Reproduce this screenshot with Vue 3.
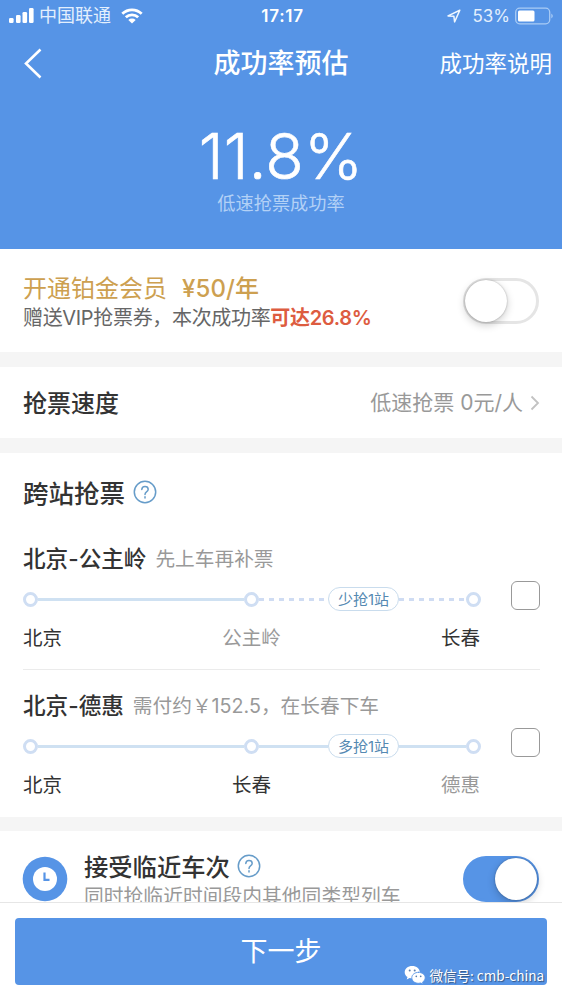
<script setup>
const routes = [
  {
    title: '北京-公主岭', note: '先上车再补票', tag: '少抢1站', dashed: true,
    stops: [{ name: '北京' }, { name: '公主岭', muted: true }, { name: '长春' }],
  },
  {
    title: '北京-德惠', note: '需付约￥152.5，在长春下车', tag: '多抢1站', dashed: false,
    stops: [{ name: '北京' }, { name: '长春' }, { name: '德惠', muted: true }],
  },
]
</script>

<template>
  <div class="screen">
    <header class="hero">
      <div class="status">
        <div class="carrier">
          <svg class="signal" width="26" height="15" viewBox="0 0 26 15">
            <rect x="0" y="10" width="4.600" height="5" rx="1.300" /><rect x="7" y="7" width="4.600" height="8" rx="1.300" />
            <rect x="13.500" y="4" width="4.600" height="11" rx="1.300" /><rect x="20" y="0" width="4.600" height="15" rx="1.300" />
          </svg>
          <span class="carrier-name">中国联通</span>
          <svg class="wifi" width="22" height="16" viewBox="0 0 22 16">
            <path d="M1.300 5.800a14 14 0 0 1 19.400 0M4.800 9.300a9 9 0 0 1 12.400 0" />
            <path class="solid" d="M7.300 12a5.400 5.400 0 0 1 7.400 0L11 15.600z" />
          </svg>
        </div>
        <span class="time">17:17</span>
        <div class="power">
          <svg width="14" height="14" viewBox="0 0 14 14"><path class="arrow" d="M1 6.900 12.800 1.200 7.600 12.900 6.900 7.300z" /></svg>
          <span class="percent">53%</span>
          <svg width="40" height="18" viewBox="0 0 40 18">
            <rect class="shell" x=".7" y="1.200" width="34" height="15.600" rx="4" />
            <rect class="charge" x="3" y="3.500" width="16.500" height="11" rx="1.500" />
            <path class="tip" d="M36.300 6.500q3 2.500 0 5z" />
          </svg>
        </div>
      </div>
      <nav class="nav">
        <svg class="back" width="18" height="31" viewBox="0 0 18 31"><path d="M16.500 1.500 2 15.500l14.500 14" /></svg>
        <h1>成功率预估</h1>
        <span class="nav-link">成功率说明</span>
      </nav>
      <div class="rate">11.8%</div>
      <div class="rate-label">低速抢票成功率</div>
    </header>

    <section class="member">
      <div class="member-text">
        <div class="gold"><span>开通铂金会员</span><span class="price">¥50/年</span></div>
        <div class="gift">赠送VIP抢票券，本次成功率<b>可达26.8%</b></div>
      </div>
      <div class="toggle"><i></i></div>
    </section>

    <section class="speed">
      <h2>抢票速度</h2>
      <span class="speed-value">低速抢票 0元/人</span>
      <svg width="10" height="16" viewBox="0 0 10 16"><path d="m1.500 1.500 6.500 6.500-6.500 6.500" /></svg>
    </section>

    <section class="cross">
      <div class="cross-head">
        <h2>跨站抢票</h2>
        <svg class="help" width="24" height="24" viewBox="0 0 24 24"><circle cx="12" cy="12" r="10.700" /><path d="M8.800 9.600q.1-3.100 3.200-3.100t3.200 2.700q0 1.500-1.700 2.600Q12 12.900 12 14.600M12 16.700v1.400" /></svg>
      </div>
      <article v-for="route in routes" :key="route.title" class="route">
        <div class="route-head"><h3>{{ route.title }}</h3><span>{{ route.note }}</span></div>
        <div class="track-row">
          <div class="track" :class="{ dashed: route.dashed }">
            <i class="dot"></i><i class="line first"></i>
            <i class="dot"></i><i class="line second"></i>
            <span class="tag">{{ route.tag }}</span>
            <i class="line third"></i><i class="dot"></i>
          </div>
          <i class="check"></i>
        </div>
        <div class="stops">
          <span v-for="stop in route.stops" :key="stop.name" :class="{ muted: stop.muted }">{{ stop.name }}</span>
        </div>
      </article>
    </section>

    <section class="nearby">
      <svg class="clock" width="46" height="46" viewBox="0 0 46 46">
        <circle class="disc" cx="23" cy="23" r="22.300" /><circle class="face" cx="23" cy="23" r="12" /><path d="M22.500 16.500v7.300h5" />
      </svg>
      <div class="nearby-text">
        <div class="nearby-head">
          <h2>接受临近车次</h2>
          <svg class="help" width="24" height="24" viewBox="0 0 24 24"><circle cx="12" cy="12" r="10.700" /><path d="M8.800 9.600q.1-3.100 3.200-3.100t3.200 2.700q0 1.500-1.700 2.600Q12 12.900 12 14.600M12 16.700v1.400" /></svg>
        </div>
        <p>同时抢临近时间段内其他同类型列车</p>
      </div>
      <div class="toggle on"><i></i></div>
    </section>

    <footer class="bottom">
      <div class="next">下一步
        <div class="wechat">
          <svg width="22" height="20" viewBox="0 0 22 20">
            <path class="bubble" d="M8.200 1C3.900 1 .7 3.700.7 7.200c0 2 1.100 3.700 2.800 4.900l-.8 2.500 2.900-1.500c.9.200 1.700.3 2.600.3 4.200 0 7.600-2.700 7.600-6.200S12.500 1 8.200 1z" />
            <path class="bubble edge" d="M14.500 7.300c-3.800 0-6.700 2.400-6.700 5.500s2.900 5.500 6.700 5.500c.8 0 1.600-.1 2.300-.3l2.400 1.300-.6-2.200c1.600-1.100 2.600-2.600 2.600-4.300 0-3.100-3-5.500-6.700-5.500z" />
            <g class="eyes"><circle cx="5.700" cy="5.500" r="1" /><circle cx="10.700" cy="5.500" r="1" /><circle cx="12.300" cy="11.300" r=".85" /><circle cx="16.700" cy="11.300" r=".85" /></g>
          </svg>
          <span>微信号: cmb-china</span>
        </div>
      </div>
    </footer>
  </div>
</template>

<style>
body { background: #fff; }
</style>

<style scoped>
* { box-sizing: border-box; margin: 0; padding: 0; }
.screen {
  width: 562px; height: 1000px; overflow: hidden; display: flex; flex-direction: column;
  background: #f5f5f5; color: #333; white-space: nowrap;
  font-family: Inter, "Noto Sans CJK SC", sans-serif;
}
svg { display: block; flex: none; fill: none; stroke-linecap: round; stroke-linejoin: round; }
h1, h2, h3 { font-weight: 500; }
i { display: block; flex: none; }

.hero { height: 249px; flex: none; background: #5694e6; color: #fff; }
.status { height: 31px; display: grid; grid-template-columns: 1fr auto 1fr; align-items: center; padding: 0 9px; }
.carrier { display: flex; align-items: center; }
.signal { fill: #fff; }
.carrier-name { padding-top: 1px; margin-left: 4px; font-size: 18px; line-height: 30px; color: #e3effd; }
.wifi { margin-left: 10px; stroke: #fff; stroke-width: 2.800; stroke-linecap: butt; }
.wifi .solid { fill: #fff; stroke: none; }
.time { margin-left: 3px; font-size: 17px; font-weight: 600; letter-spacing: .7px; }
.power { display: flex; align-items: center; justify-content: flex-end; }
.arrow { stroke: #eef6ff; stroke-width: 1.500; }
.percent { margin: 0 5px 0 11px; font-size: 17px; color: #e3effd; }
.power svg:last-child { margin-right: -2px; }
.shell { stroke: #a9cbf5; stroke-width: 1.300; }
.charge { fill: #fff; }
.tip { fill: #a9cbf5; }
.nav { height: 64px; display: grid; grid-template-columns: 1fr auto 1fr; align-items: center; padding: 0 10px; }
.back { margin-left: 14px; stroke: #fff; stroke-width: 2.600; stroke-linecap: butt; stroke-linejoin: miter; }
.nav h1 { font-size: 27px; line-height: 40px; padding-top: 2px; }
.nav-link { justify-self: end; padding-top: 1px; font-size: 22.500px; line-height: 34px; }
.rate { margin-top: 31px; height: 60px; line-height: 60px; text-align: center; font-size: 63px; font-weight: 300; letter-spacing: .2px; -webkit-text-stroke: .6px #fff; }
.rate-label { margin-top: 7px; line-height: 20px; text-align: center; font-size: 18.200px; color: #b3d1f6; }

section { background: #fff; flex: none; }
.member { height: 103px; display: flex; justify-content: space-between; padding: 23px 23px 0; }
.gold { display: flex; gap: 15px; font-size: 24px; line-height: 33px; color: #cda050; }
.price { letter-spacing: .1px; font-weight: 500; }
.gift { font-size: 20px; line-height: 27px; color: #666; letter-spacing: -.33px; }
.gift b { font-weight: 600; color: #dd5c40; }
.toggle { position: relative; flex: none; width: 76px; height: 46px; margin-top: 7px; border: 3px solid #e5e5e5; border-radius: 23px; background: #fff; }
.member .toggle { margin-top: 6px; }
.toggle i { position: absolute; left: -1px; top: -1px; width: 42px; height: 42px; border-radius: 50%; background: #fff; box-shadow: 0 3px 8px rgba(0,0,0,.2), 0 0 2px rgba(0,0,0,.3); }
.toggle.on { background: #5694e6; border-color: #5694e6; }
.toggle.on i { left: 29px; }

.speed { height: 71px; margin-top: 15px; padding: 0 22px 0 23px; display: flex; align-items: center; }
.speed h2 { flex: 1; padding-top: 2px; font-size: 24px; line-height: 36px; }
.speed-value { padding-top: 1px; font-size: 21px; line-height: 34px; color: #999; margin-right: 7px; }
.speed svg { stroke: #c2c2c2; stroke-width: 1.800; stroke-linecap: butt; stroke-linejoin: miter; }

.cross { height: 364px; margin-top: 15px; padding: 22px 22px 0 23px; }
.cross-head { height: 36px; display: flex; align-items: center; gap: 8px; }
.cross-head h2 { padding-top: 2px; font-size: 25.500px; line-height: 36px; }
.help { stroke: #669cc9; stroke-width: 1.500; margin-top: -2px; }
.route { height: 147px; padding-top: 21px; }
.cross-head + .route { margin-top: 11px; }
.route + .route { border-top: 1px solid #ebebeb; padding-top: 20px; }
.route-head { height: 32px; display: flex; align-items: center; gap: 9px; }
.route-head h3 { font-size: 22.600px; line-height: 32px; }
.route-head span { font-size: 19.700px; line-height: 32px; color: #999; }
.track-row { height: 34px; margin-top: 1px; display: flex; align-items: center; justify-content: space-between; }
.track { width: 458px; margin-top: 12px; display: flex; align-items: center; color: #cfe1f2; }
.dot { width: 15px; height: 15px; border: 3px solid #cfdef3; border-radius: 50%; background: #fff; }
.line { height: 3px; background: currentColor; }
.first { width: 206px; }
.second { width: 69px; }
.third { width: 67px; }
.dashed .second, .dashed .third { background: repeating-linear-gradient(90deg, #cfdcf3 0 5px, transparent 5px 10px); }
.tag { width: 71px; height: 24px; border: 1.500px solid #c9dced; border-radius: 12px; text-align: center; font-size: 15px; line-height: 23px; color: #5589b2; }
.check { width: 29px; height: 29px; border: 1.500px solid #999; border-radius: 6px; margin-top: 4px; }
.stops { width: 457px; margin-top: 13px; display: grid; grid-template-columns: 1fr 1fr 1fr; font-size: 19.500px; line-height: 30px; }
.stops span:nth-child(2) { text-align: center; }
.stops span:nth-child(3) { text-align: right; }
.muted { color: #999; }

.nearby { height: 71px; margin-top: 14px; padding: 18px 23px 0 22px; overflow: hidden; display: flex; }
.clock { margin-top: 7px; }
.disc { fill: #5694e6; }
.face { fill: #fff; }
.clock path { stroke: #5694e6; stroke-width: 2.200; stroke-linecap: butt; stroke-linejoin: miter; }
.nearby-text { flex: 1; margin-left: 16px; }
.nearby-head { display: flex; align-items: center; gap: 7px; height: 36px; }
.nearby-head h2 { font-size: 24.300px; line-height: 36px; }
.nearby-text p { font-size: 19.800px; line-height: 22px; color: #999; }

.bottom { position: relative; flex: none; height: 98px; padding: 15px; border-top: 1px solid #e6e6e6; background: #fff; }
.next { position: relative; height: 67px; border-radius: 4px; background: #5694e6; color: #fff; text-align: center; font-size: 27px; line-height: 68px; }
.wechat { position: absolute; right: 3px; bottom: 0; height: 21px; display: flex; align-items: center; gap: 4px; font: 13.500px/20px "Noto Sans CJK SC", sans-serif; color: #fff; text-shadow: 1px 1px 1px rgba(40,60,90,.75); }
.bubble { fill: #fff; }
.edge { stroke: #5694e6; stroke-width: .9; }
.eyes { fill: #5a7fae; }
</style>
